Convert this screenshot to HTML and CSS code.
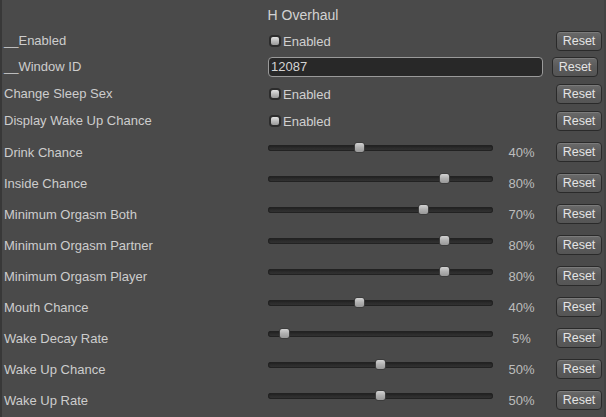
FILE: index.html
```html
<!DOCTYPE html>
<html>
<head>
<meta charset="utf-8">
<link rel="stylesheet" href="styles.css">
</head>
<body>
<div class="panel">
  <div class="title">H Overhaul</div>
  <div class="rows">
    <div class="row r26">
      <span class="label">__Enabled</span>
      <label class="toggle-wrap"><span class="toggle"></span>Enabled</label>
      <button class="reset">Reset</button>
    </div>
    <div class="row r27">
      <span class="label">__Window ID</span>
      <div class="textfield">12087</div>
      <button class="reset reset-text">Reset</button>
    </div>
    <div class="row r27">
      <span class="label">Change Sleep Sex</span>
      <label class="toggle-wrap"><span class="toggle"></span>Enabled</label>
      <button class="reset">Reset</button>
    </div>
    <div class="row r31">
      <span class="label">Display Wake Up Chance</span>
      <label class="toggle-wrap"><span class="toggle"></span>Enabled</label>
      <button class="reset">Reset</button>
    </div>
    <div class="row r31 slider-row">
      <span class="label">Drink Chance</span>
      <input class="slider" type="range" min="0" max="100" value="40">
      <span class="value">40%</span>
      <button class="reset">Reset</button>
    </div>
    <div class="row r31 slider-row">
      <span class="label">Inside Chance</span>
      <input class="slider" type="range" min="0" max="100" value="80">
      <span class="value">80%</span>
      <button class="reset">Reset</button>
    </div>
    <div class="row r31 slider-row">
      <span class="label">Minimum Orgasm Both</span>
      <input class="slider" type="range" min="0" max="100" value="70">
      <span class="value">70%</span>
      <button class="reset">Reset</button>
    </div>
    <div class="row r31 slider-row">
      <span class="label">Minimum Orgasm Partner</span>
      <input class="slider" type="range" min="0" max="100" value="80">
      <span class="value">80%</span>
      <button class="reset">Reset</button>
    </div>
    <div class="row r31 slider-row">
      <span class="label">Minimum Orgasm Player</span>
      <input class="slider" type="range" min="0" max="100" value="80">
      <span class="value">80%</span>
      <button class="reset">Reset</button>
    </div>
    <div class="row r31 slider-row">
      <span class="label">Mouth Chance</span>
      <input class="slider" type="range" min="0" max="100" value="40">
      <span class="value">40%</span>
      <button class="reset">Reset</button>
    </div>
    <div class="row r31 slider-row">
      <span class="label">Wake Decay Rate</span>
      <input class="slider" type="range" min="0" max="100" value="5">
      <span class="value">5%</span>
      <button class="reset">Reset</button>
    </div>
    <div class="row r31 slider-row">
      <span class="label">Wake Up Chance</span>
      <input class="slider" type="range" min="0" max="100" value="50">
      <span class="value">50%</span>
      <button class="reset">Reset</button>
    </div>
    <div class="row r31 slider-row">
      <span class="label">Wake Up Rate</span>
      <input class="slider" type="range" min="0" max="100" value="50">
      <span class="value">50%</span>
      <button class="reset">Reset</button>
    </div>
  </div>
</div>
</body>
</html>
```

FILE: styles.css
```css
html, body {
  margin: 0;
  padding: 0;
  height: 100%;
  overflow: hidden;
  background: #4a4a4a;
}

.panel {
  height: 100%;
  box-sizing: border-box;
  border-left: 2px solid #383838;
  border-right: 2px solid #434343;
  padding-left: 2px;
  padding-right: 2px;
  font-family: "Liberation Sans", Arial, sans-serif;
  font-size: 13px;
  color: #cdcdcd;
}

.title {
  height: 31px;
  line-height: 31px;
  text-align: center;
  font-size: 14px;
  color: #d2d2d2;
}

.rows {
  display: flex;
  flex-direction: column;
}

.row {
  display: flex;
  align-items: flex-start;
}

.r26 { height: 26px; }
.r27 { height: 27px; }
.r31 { height: 31px; }

.label {
  width: 264px;
  flex: none;
  line-height: 20px;
  white-space: nowrap;
}

.slider-row .label,
.slider-row .value {
  padding-top: 1px;
}

.toggle-wrap {
  display: flex;
  align-items: center;
  height: 20px;
  color: #d0d0d0;
}

.toggle {
  width: 12px;
  height: 12px;
  box-sizing: border-box;
  margin-left: 1px;
  margin-right: 2px;
  border-radius: 4px;
  background: #2c2c2c;
  padding: 2px;
  display: flex;
}

.toggle::after {
  content: "";
  flex: 1;
  border-radius: 2px;
  background: linear-gradient(#e4e4e4, #b4b4b4 60%, #9a9a9a);
}

.textfield {
  width: 275px;
  height: 20px;
  box-sizing: border-box;
  border: 1px solid #9a9a9a;
  border-radius: 4px;
  background: #282828;
  color: #d4d4d4;
  line-height: 18px;
  padding-left: 2px;
}

.reset {
  margin-left: auto;
  width: 46px;
  height: 20px;
  box-sizing: border-box;
  padding: 0;
  border: 1px solid #2a2a2a;
  border-radius: 4px;
  background: linear-gradient(#6a6a6a, #5a5a5a 50%, #555555);
  box-shadow: inset 0 1px 0 rgba(255, 255, 255, 0.12);
  font-family: "Liberation Sans", Arial, sans-serif;
  font-size: 12.5px;
  color: #e4e4e4;
  line-height: 18px;
  margin-right: 0;
}

.reset-text {
  margin-right: 4px;
}

.slider {
  -webkit-appearance: none;
  appearance: none;
  width: 225px;
  height: 6px;
  margin: 3px 0 0 0;
  padding: 0;
  background: transparent;
  flex: none;
}

.slider::-webkit-slider-runnable-track {
  height: 6px;
  border-radius: 3px;
  background: linear-gradient(#1c1c1c, #2c2c2c 50%, #333333);
  box-shadow: inset 0 0 0 1px #222222;
}

.slider::-webkit-slider-thumb {
  -webkit-appearance: none;
  appearance: none;
  width: 11px;
  height: 11px;
  margin-top: -3px;
  box-sizing: border-box;
  border: 1px solid #3c3c3c;
  border-radius: 3px;
  background: linear-gradient(#d2d2d2, #b0b0b0 50%, #989898);
}

.value {
  width: 57px;
  text-align: center;
  line-height: 20px;
  color: #bdbdbd;
  flex: none;
}
```
